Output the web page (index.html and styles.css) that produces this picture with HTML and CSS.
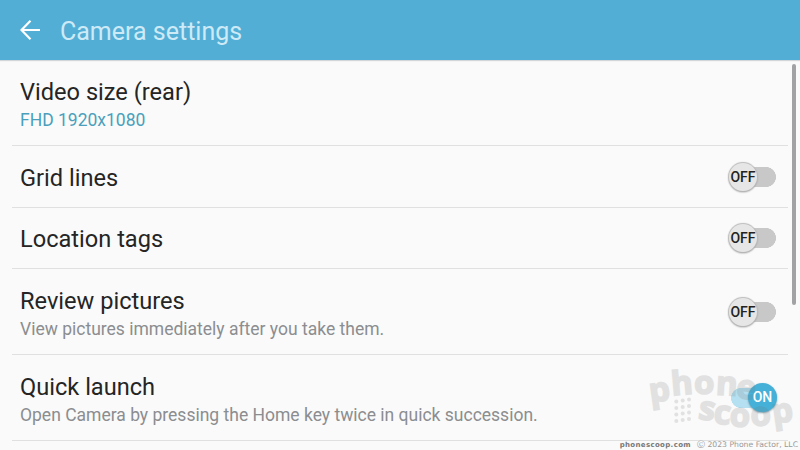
FILE: index.html
```html
<!DOCTYPE html>
<html lang="en">
<head>
  <meta charset="UTF-8">
  <meta name="viewport" content="width=device-width, initial-scale=1.0">
  <title>Camera settings</title>
  <link rel="stylesheet" href="styles.css">
</head>
<body>

<header class="topbar">
  <svg class="back" width="20" height="20" viewBox="0 0 20 20">
    <path d="M10.5 .8 L1.5 10 L10.5 19.2 M1.5 10 H20"/>
  </svg>
  <h1>Camera settings</h1>
</header>

<main class="settings">
  <div class="row row-tall">
    <div class="label">
      <div class="title">Video size (rear)</div>
      <div class="value">FHD 1920x1080</div>
    </div>
  </div>
  <div class="row">
    <div class="title">Grid lines</div>
    <div class="switch"><span class="knob">OFF</span></div>
  </div>
  <div class="row row-short">
    <div class="title">Location tags</div>
    <div class="switch"><span class="knob">OFF</span></div>
  </div>
  <div class="row row-tall">
    <div class="label">
      <div class="title">Review pictures</div>
      <div class="desc">View pictures immediately after you take them.</div>
    </div>
    <div class="switch"><span class="knob">OFF</span></div>
  </div>
  <div class="row row-tall">
    <div class="label">
      <div class="title">Quick launch</div>
      <div class="desc">Open Camera by pressing the Home key twice in quick succession.</div>
    </div>
    <div class="switch on"><span class="knob">ON</span></div>
  </div>
</main>

<div class="scrollbar"></div>

<svg class="watermark" width="160" height="80" viewBox="640 360 160 80">
  <text x="650.5 672 694 715.5 735" y="402.5 395.5 394 394.5 397" rotate="-8 -5 0 3 9">phone</text>
  <text x="697.5 713 729.5 751 773.5" y="418.5 423 426.5 426 423.5" rotate="9 6 1 -3 -8">scoop</text>
  <g class="dots">
    <circle cx="676.3" cy="401.5" r="2"/><circle cx="682.7" cy="400.4" r="2"/><circle cx="689" cy="399.4" r="2"/>
    <circle cx="676.3" cy="408" r="2"/><circle cx="682.7" cy="407" r="2"/><circle cx="689" cy="406" r="2"/>
    <circle cx="676.3" cy="414.5" r="2"/><circle cx="682.7" cy="413.5" r="2"/><circle cx="689" cy="412.5" r="2"/>
    <circle cx="676.3" cy="421" r="2"/><circle cx="682.7" cy="420" r="2"/><circle cx="689" cy="419" r="2"/>
  </g>
</svg>

<footer class="credit"><b>phonescoop.com</b><span>Ⓒ 2023 Phone Factor, LLC</span></footer>

</body>
</html>
```

FILE: styles.css
```css
body {
  margin: 0;
  height: 450px;
  position: relative;
  overflow: hidden;
  font-family: Roboto, sans-serif;
  background: #fafafa;
}

.topbar {
  height: 60px;
  box-sizing: border-box;
  display: flex;
  align-items: center;
  gap: 20px;
  padding: 0 20px;
  background: #53aed5;
  box-shadow: 0 1px 1px #d2d6d8;
}

.topbar h1 {
  margin: 4px 0 0;
  font-size: 25px;
  line-height: 30px;
  font-weight: 400;
  color: #cdeaf7;
}

.back {
  fill: none;
  stroke: #fff;
  stroke-width: 2.2;
}

.settings {
  padding: 0 12px;
}

.row {
  height: 62px;
  box-sizing: border-box;
  display: flex;
  align-items: center;
  justify-content: space-between;
  padding: 0 12px 0 8px;
  border-bottom: 1px solid #e0e0e0;
}

.row-short {
  height: 61px;
}

.row-tall {
  height: 86px;
}

.title {
  font-size: 23.6px;
  line-height: 30px;
  color: #252525;
}

.row > .title {
  padding-top: 2px;
}

.value,
.desc {
  font-size: 17.5px;
  line-height: 26px;
  color: #8b8d90;
}

.label {
  padding-top: 4px;
}

.value {
  color: #4a9fbc;
}

.switch {
  width: 47px;
  height: 28px;
  display: flex;
  align-items: center;
  background: linear-gradient(#c8c8c8, #c8c8c8) 14px 4px / 23px 20px no-repeat,
              radial-gradient(circle at 37px 14px, #c8c8c8 9.7px, transparent 10.2px);
}

.knob {
  width: 28px;
  height: 28px;
  border-radius: 50%;
  font-size: 14px;
  font-weight: 500;
  line-height: 29px;
  text-align: center;
  color: #222;
  background: #e6e6e6;
  box-shadow: 0 0 1px 1px #bbb, 0 1px 2px #888;
}

.on {
  justify-content: flex-end;
  margin-right: -1px;
  background: linear-gradient(#b5e0f1, #b5e0f1) 11px 4px / 24px 20px no-repeat,
              radial-gradient(circle at 11px 14px, #b5e0f1 9.7px, transparent 10.2px);
}

.on .knob {
  width: 29px;
  height: 29px;
  color: #fff;
  background: #45b1d8;
  box-shadow: 0 1px 2px #7d9eab;
}

.scrollbar {
  position: absolute;
  top: 64px;
  left: 792px;
  width: 4px;
  height: 241px;
  border-radius: 2px;
  background: #a2a2a4;
}

.watermark {
  position: absolute;
  left: 640px;
  top: 360px;
  fill: #777;
  stroke: #777;
  stroke-width: 1.7;
  opacity: .18;
  font: 700 33px "Open Sans", sans-serif;
}

.dots {
  stroke: none;
}

.credit {
  position: absolute;
  right: 2px;
  bottom: -1px;
  display: flex;
  gap: 6px;
  font: 7.7px/12px "DejaVu Sans", sans-serif;
  color: #999;
  white-space: nowrap;
}

.credit b {
  font-size: 7px;
  letter-spacing: .35px;
  color: #777;
}
```
